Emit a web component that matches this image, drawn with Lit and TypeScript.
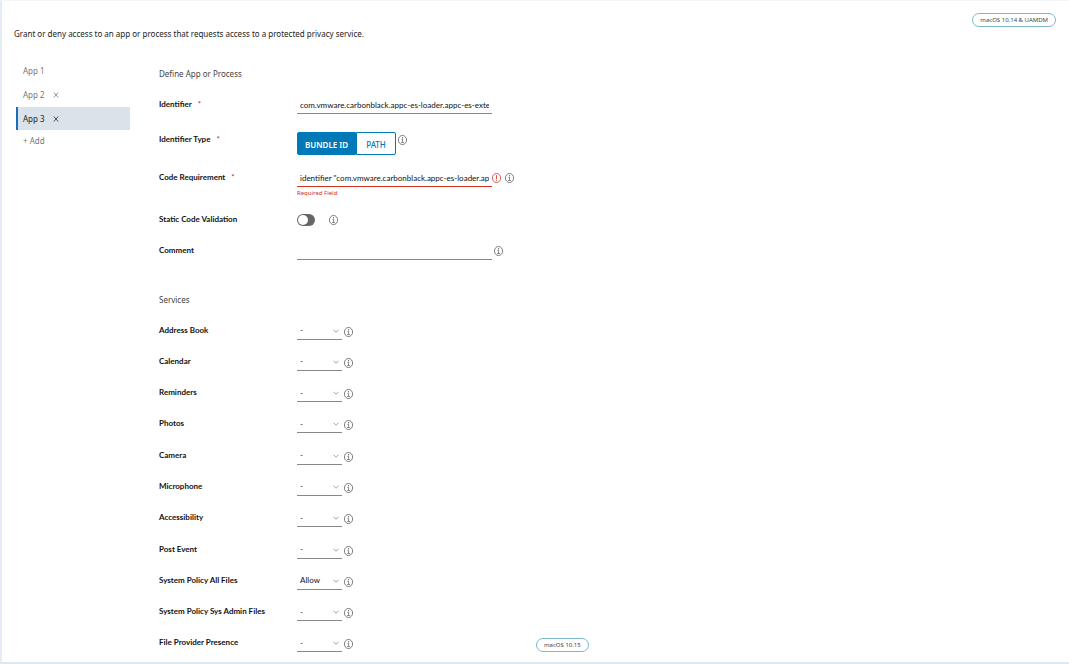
import { LitElement, html, css, svg, nothing } from "lit";
import { customElement, property, state } from "lit/decorators.js";
import { classMap } from "lit/directives/class-map.js";

interface Service {
  name: string;
  value: string;
  badge?: string;
}

const SERVICES: Service[] = [
  { name: "Address Book", value: "-" },
  { name: "Calendar", value: "-" },
  { name: "Reminders", value: "-" },
  { name: "Photos", value: "-" },
  { name: "Camera", value: "-" },
  { name: "Microphone", value: "-" },
  { name: "Accessibility", value: "-" },
  { name: "Post Event", value: "-" },
  { name: "System Policy All Files", value: "Allow" },
  { name: "System Policy Sys Admin Files", value: "-" },
  { name: "File Provider Presence", value: "-", badge: "macOS 10.15" },
];

@customElement("status-icon")
class StatusIcon extends LitElement {
  @property() kind = "info";

  static styles = css`
    :host {
      display: block;
      width: 9px;
      height: 10px;
      color: #555;
    }
    :host([kind="error"]) {
      color: #d0321c;
    }
    .glyph {
      display: block;
      width: 100%;
      height: 100%;
      fill: none;
      stroke: currentColor;
    }
  `;

  render() {
    return html`<svg class="glyph" viewBox="0 0 18 20" aria-hidden="true">
      <ellipse cx="9" cy="10" rx="8.2" ry="9.1" stroke-width="1.5" />
      ${this.kind === "error"
        ? svg`<path d="M9 4.5V11.5M9 13.4V15.6" stroke-width="1.8" />`
        : svg`<path d="M9 4.4V6.6" stroke-width="2" /><path d="M6.8 8.8H9.2V14.8M6.4 15H11.8" stroke-width="1.4" />`}
    </svg>`;
  }
}

@customElement("version-badge")
class VersionBadge extends LitElement {
  static styles = css`
    :host {
      display: block;
      align-self: end;
      box-sizing: border-box;
      height: 14px;
      padding: 0 7px;
      border: 1px solid #7db9c9;
      border-radius: 7px;
      color: #444;
      font-size: 6px;
      line-height: 12px;
      white-space: nowrap;
    }
  `;

  render() {
    return html`<slot></slot>`;
  }
}

@customElement("app-root")
class AppRoot extends LitElement {
  @state() idType = "bundle";
  @state() selected = "App 3";

  static styles = css`
    :host {
      display: block;
      font-family: "Noto Sans", "Open Sans", sans-serif;
      font-size: 8px;
      line-height: 16px;
      color: #222;
    }
    .page {
      display: flex;
      flex-direction: column;
      box-sizing: border-box;
      min-height: 100vh;
      border-left: 2px solid #e6ecf4;
      border-top: 1px solid #f4f5f9;
      border-bottom: 2px solid #dfe7ee;
      background: #fff;
    }
    .header {
      display: flex;
      flex-direction: column;
      padding: 12px 13px 0 12px;
    }
    .intro {
      margin: 0;
      line-height: 14px;
    }
    .body {
      display: flex;
      flex: 1;
      padding: 18px 0 3px 14px;
    }
    .tabs {
      display: flex;
      flex-direction: column;
      gap: 1px;
      width: 114px;
    }
    .tab {
      display: flex;
      align-items: center;
      gap: 8px;
      box-sizing: border-box;
      height: 23px;
      padding-left: 5px;
      border-left: 2px solid transparent;
      color: #777;
    }
    .tab.active {
      border-left-color: #1a6db8;
      background: #d9e3e9;
      color: #222;
    }
    .tab.add {
      height: 20px;
    }
    button {
      margin: 0;
      padding: 0;
      border: 0;
      background: none;
      color: inherit;
      font: inherit;
      cursor: pointer;
    }
    .close {
      display: block;
      width: 6px;
      height: 6px;
      fill: none;
      stroke: currentColor;
    }
    .form {
      display: flex;
      flex: 1;
      flex-direction: column;
      padding: 7px 0 0 29px;
    }
    .title {
      margin: 0;
      font-size: 8px;
      font-weight: 400;
      color: #444;
    }
    .fields {
      display: grid;
      grid-template-rows: 35px 38px 42px 31px 18px;
      padding: 14px 0 32px;
    }
    .row {
      display: grid;
      grid-template-columns: 138px 239px auto;
      justify-content: start;
      align-items: start;
    }
    .label {
      display: flex;
      gap: 6px;
      color: #111;
      font-family: Lato, sans-serif;
      font-weight: 700;
    }
    .required {
      color: #b03030;
      font-weight: 400;
    }
    .control {
      display: flex;
      align-items: center;
      gap: 2px;
      min-height: 18px;
    }
    .control.split {
      gap: 4px;
    }
    .flagged {
      display: flex;
      align-items: center;
    }
    .text,
    .select {
      box-sizing: border-box;
      height: 18px;
      margin: 0;
      padding: 0 3px;
      border: 0;
      border-bottom: 1px solid #888;
      border-radius: 0;
      outline: none;
      background: none;
      color: #111;
      font-family: Lato, sans-serif;
      font-size: 8px;
    }
    .text {
      width: 195px;
    }
    .text.invalid {
      border-bottom-color: #d0321c;
    }
    .error {
      color: #d0321c;
      font-size: 6px;
      line-height: 12px;
    }
    .type {
      align-items: flex-start;
    }
    .type status-icon {
      margin-top: 4px;
    }
    .segments {
      display: flex;
      height: 23px;
      margin-top: 1px;
    }
    .segment {
      padding: 2px 9px 0;
      border: 1px solid #0079b8;
      border-radius: 0 2px 2px 0;
      color: #0079b8;
      font-weight: 500;
    }
    .segment.on {
      padding: 2px 7px 0;
      border-radius: 2px 0 0 2px;
      background: #0079b8;
      color: #fff;
      font-weight: 600;
    }
    .toggle {
      display: grid;
      box-sizing: border-box;
      width: 18px;
      height: 12px;
      margin: 0 12px 0 0;
      padding: 1px;
      border-radius: 6px;
      appearance: none;
      background: #666;
    }
    .toggle::before {
      content: "";
      width: 10px;
      height: 10px;
      border-radius: 50%;
      background: #fff;
    }
    .toggle:checked {
      justify-content: end;
      background: #0079b8;
    }
    .services {
      display: grid;
      flex: 1;
      grid-auto-rows: 1fr;
      align-items: center;
      padding-top: 7px;
    }
    .services status-icon {
      padding-top: 2px;
    }
    .picker {
      display: grid;
      width: 45px;
      align-items: center;
    }
    .picker > * {
      grid-area: 1 / 1;
    }
    .select {
      width: 100%;
      appearance: none;
    }
    .chevron {
      justify-self: end;
      width: 6px;
      height: 4px;
      margin-right: 3px;
      fill: none;
      stroke: #888;
      pointer-events: none;
    }
  `;

  private tab(name: string, closable: boolean) {
    return html`<div class=${classMap({ tab: true, active: this.selected === name })}>
      <button @click=${() => (this.selected = name)}>${name}</button>
      ${closable
        ? html`<button aria-label="Remove ${name}">
            <svg class="close" viewBox="0 0 12 12"><path d="M1.5 1L10.5 11M10.5 1L1.5 11" stroke-width="1.5" /></svg>
          </button>`
        : nothing}
    </div>`;
  }

  private segment(id: string, text: string) {
    const on = this.idType === id;
    return html`<button
      class=${classMap({ segment: true, on })}
      aria-pressed=${on}
      @click=${() => (this.idType = id)}
    >${text}</button>`;
  }

  private service(item: Service, index: number) {
    const id = `service-${index}`;
    return html`<div class="row">
      <label class="label" for=${id}>${item.name}</label>
      <div class="control">
        <div class="picker">
          <select class="select" id=${id}>
            ${["-", "Allow", "Deny"].map(
              (option) => html`<option ?selected=${option === item.value}>${option}</option>`
            )}
          </select>
          <svg class="chevron" viewBox="0 0 12 8"><path d="M1 1.5L6 6.5L11 1.5" stroke-width="1.6" /></svg>
        </div>
        <status-icon></status-icon>
      </div>
      ${item.badge ? html`<version-badge>${item.badge}</version-badge>` : nothing}
    </div>`;
  }

  render() {
    const star = html`<span class="required">*</span>`;
    return html`<main class="page">
      <header class="header">
        <version-badge>macOS 10.14 &amp; UAMDM</version-badge>
        <p class="intro">
          Grant or deny access to an app or process that requests access to a protected privacy service.
        </p>
      </header>
      <div class="body">
        <nav class="tabs">
          ${this.tab("App 1", false)} ${this.tab("App 2", true)} ${this.tab("App 3", true)}
          <div class="tab add"><button>+ Add</button></div>
        </nav>
        <form class="form" @submit=${(e: Event) => e.preventDefault()}>
          <h2 class="title">Define App or Process</h2>
          <div class="fields">
            <div class="row">
              <label class="label" for="identifier">Identifier ${star}</label>
              <input class="text" id="identifier" value="com.vmware.carbonblack.appc-es-loader.appc-es-exte" />
            </div>
            <div class="row">
              <span class="label" id="type-label">Identifier Type ${star}</span>
              <div class="control type">
                <div class="segments" role="group" aria-labelledby="type-label">
                  ${this.segment("bundle", "BUNDLE ID")}${this.segment("path", "PATH")}
                </div>
                <status-icon></status-icon>
              </div>
            </div>
            <div class="row">
              <label class="label" for="requirement">Code Requirement ${star}</label>
              <div>
                <div class="control split">
                  <div class="flagged">
                    <input
                      class="text invalid"
                      id="requirement"
                      aria-describedby="requirement-error"
                      value='identifier "com.vmware.carbonblack.appc-es-loader.appc-es'
                    />
                    <status-icon kind="error"></status-icon>
                  </div>
                  <status-icon></status-icon>
                </div>
                <div class="error" id="requirement-error">Required Field</div>
              </div>
            </div>
            <div class="row">
              <label class="label" for="validation">Static Code Validation</label>
              <div class="control">
                <input class="toggle" id="validation" type="checkbox" role="switch" />
                <status-icon></status-icon>
              </div>
            </div>
            <div class="row">
              <label class="label" for="comment">Comment</label>
              <div class="control">
                <input class="text" id="comment" />
                <status-icon></status-icon>
              </div>
            </div>
          </div>
          <h2 class="title">Services</h2>
          <div class="services">${SERVICES.map((item, i) => this.service(item, i))}</div>
        </form>
      </div>
    </main>`;
  }
}
